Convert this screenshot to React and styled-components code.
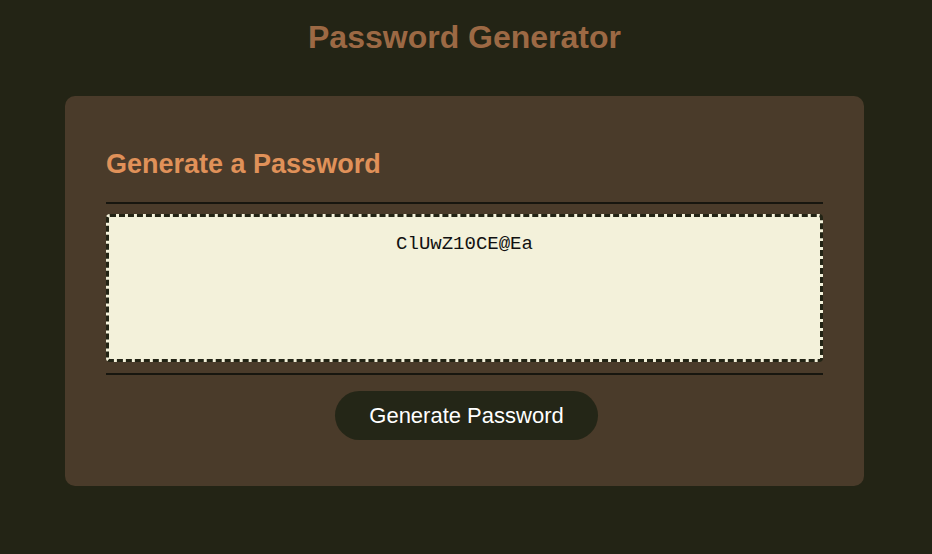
import React from "react";
import styled, { createGlobalStyle } from "styled-components";

const GlobalStyle = createGlobalStyle`
  html, body {
    margin: 0;
    padding: 0;
    background: #232415;
    font-family: "Liberation Sans", Arial, Helvetica, sans-serif;
  }
  * { box-sizing: border-box; }
`;

const Wrapper = styled.div`
  padding: 19px 3px 0 0;
`;

const Title = styled.h1`
  margin: 0 0 40px;
  text-align: center;
  font-size: 32px;
  line-height: 36.8px;
  font-weight: 700;
  color: #9c6944;
`;

const Card = styled.section`
  width: 799px;
  margin: 0 auto;
  background: #4a3b2a;
  border-radius: 10px;
  padding: 30px 41px 46px;
  font-size: 18px;
`;

const CardHeader = styled.div`
  &::after {
    content: "";
    display: block;
    height: 2px;
    background: #17160f;
  }
`;

const CardTitle = styled.h2`
  margin: 23px 0 22px;
  font-size: 27px;
  line-height: 31px;
  font-weight: 700;
  color: #e09159;
`;

const CardBody = styled.div`
  padding: 10px 0 11px;
`;

const Output = styled.textarea`
  display: block;
  width: 100%;
  height: 148px;
  margin: 0;
  padding: 16px 16px;
  resize: none;
  background: #f3f1da;
  border: 3px dashed #232415;
  border-radius: 4px;
  font-family: "Liberation Mono", "Courier New", monospace;
  font-size: 19px;
  line-height: 22px;
  text-align: center;
  color: #111;
  outline: none;
`;

const CardFooter = styled.div`
  text-align: center;
  &::before {
    content: "";
    display: block;
    height: 2px;
    background: #17160f;
  }
`;

const Button = styled.button`
  display: inline-block;
  margin: 16px 16px 0 20px;
  padding: 14px 34px 13px;
  border: none;
  border-radius: 25px;
  background: #242617;
  color: #ffffff;
  font-family: "Liberation Sans", Arial, Helvetica, sans-serif;
  font-size: 22px;
  line-height: 22px;
  cursor: pointer;
`;

export default function App() {
  return (
    <>
      <GlobalStyle />
      <Wrapper>
        <Title>Password Generator</Title>
        <Card>
          <CardHeader>
            <CardTitle>Generate a Password</CardTitle>
          </CardHeader>
          <CardBody>
            <Output readOnly value="ClUwZ10CE@Ea" aria-label="Generated Password" />
          </CardBody>
          <CardFooter>
            <Button type="button">Generate Password</Button>
          </CardFooter>
        </Card>
      </Wrapper>
    </>
  );
}
